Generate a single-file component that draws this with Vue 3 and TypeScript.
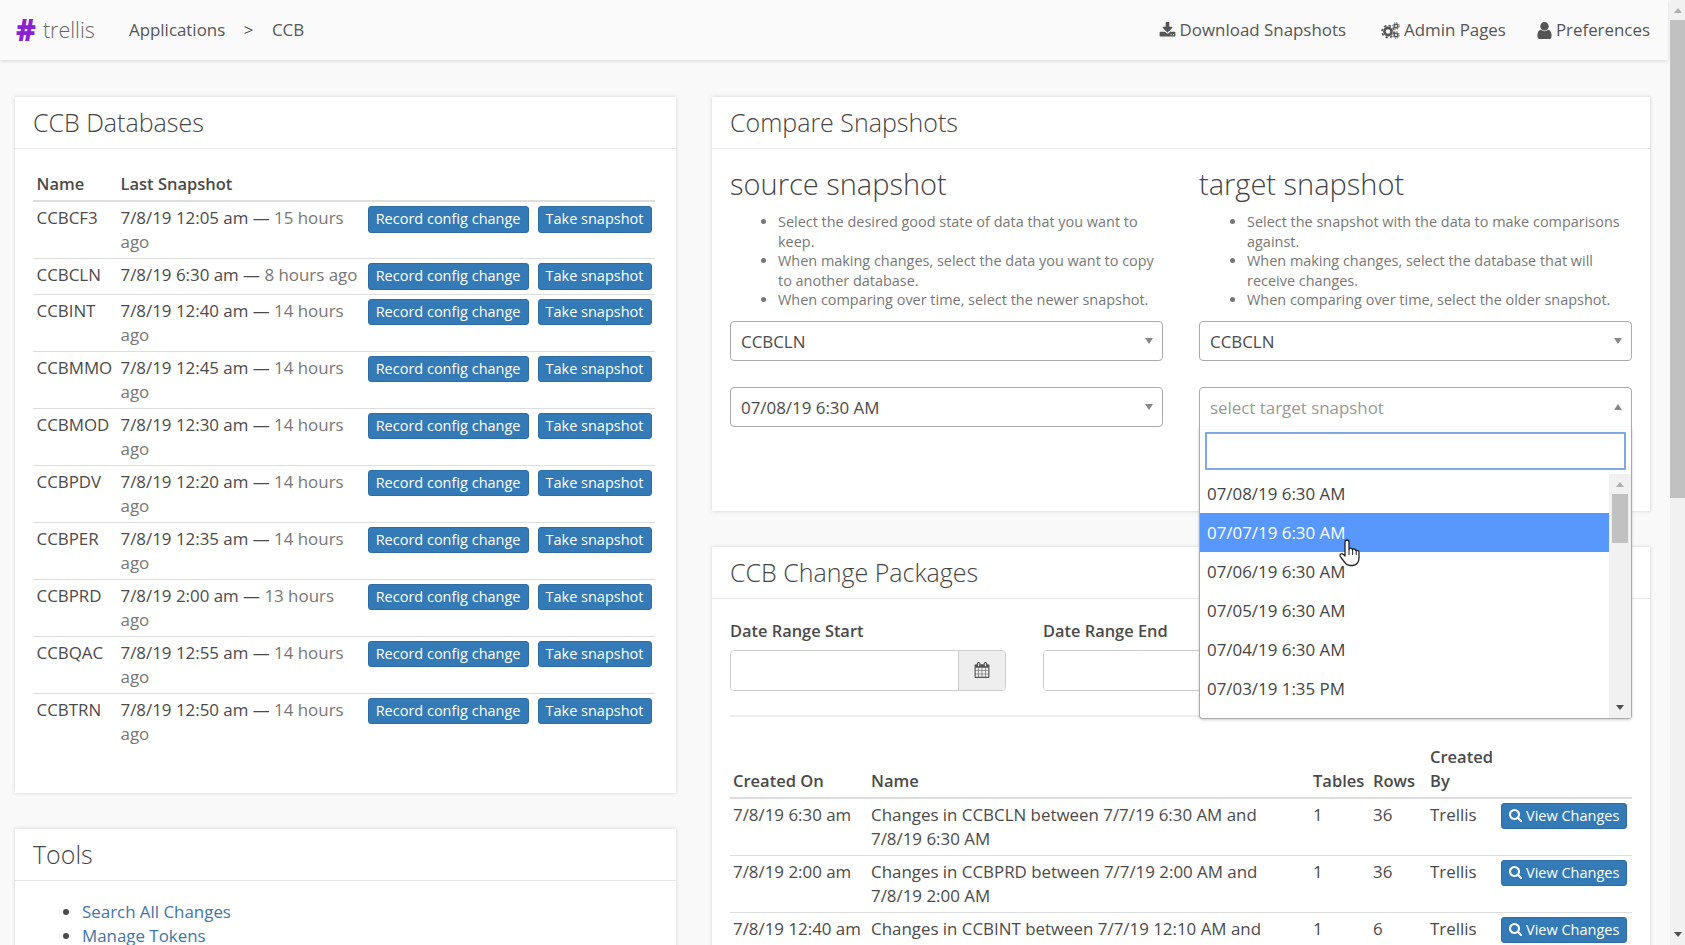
<script setup lang="ts">
interface DbRow {
  name: string
  stamp: string
  ago: string
}

interface PackageRow {
  created: string
  title: string
  tables: number
  rows: number
}

const databases: DbRow[] = [
  { name: 'CCBCF3', stamp: '7/8/19 12:05 am', ago: '15 hours ago' },
  { name: 'CCBCLN', stamp: '7/8/19 6:30 am', ago: '8 hours ago' },
  { name: 'CCBINT', stamp: '7/8/19 12:40 am', ago: '14 hours ago' },
  { name: 'CCBMMO', stamp: '7/8/19 12:45 am', ago: '14 hours ago' },
  { name: 'CCBMOD', stamp: '7/8/19 12:30 am', ago: '14 hours ago' },
  { name: 'CCBPDV', stamp: '7/8/19 12:20 am', ago: '14 hours ago' },
  { name: 'CCBPER', stamp: '7/8/19 12:35 am', ago: '14 hours ago' },
  { name: 'CCBPRD', stamp: '7/8/19 2:00 am', ago: '13 hours ago' },
  { name: 'CCBQAC', stamp: '7/8/19 12:55 am', ago: '14 hours ago' },
  { name: 'CCBTRN', stamp: '7/8/19 12:50 am', ago: '14 hours ago' },
]

const packages: PackageRow[] = [
  { created: '7/8/19 6:30 am', title: 'Changes in CCBCLN between 7/7/19 6:30 AM and 7/8/19 6:30 AM', tables: 1, rows: 36 },
  { created: '7/8/19 2:00 am', title: 'Changes in CCBPRD between 7/7/19 2:00 AM and 7/8/19 2:00 AM', tables: 1, rows: 36 },
  { created: '7/8/19 12:40 am', title: 'Changes in CCBINT between 7/7/19 12:10 AM and 7/8/19 12:40 AM', tables: 1, rows: 6 },
]

const sourceHints = [
  'Select the desired good state of data that you want to keep.',
  'When making changes, select the data you want to copy to another database.',
  'When comparing over time, select the newer snapshot.',
]

const targetHints = [
  'Select the snapshot with the data to make comparisons against.',
  'When making changes, select the database that will receive changes.',
  'When comparing over time, select the older snapshot.',
]

const snapshots = [
  '07/08/19 6:30 AM',
  '07/07/19 6:30 AM',
  '07/06/19 6:30 AM',
  '07/05/19 6:30 AM',
  '07/04/19 6:30 AM',
  '07/03/19 1:35 PM',
]

const searchPath = 'M1152 704q0-185-131.5-316.5t-316.5-131.5-316.5 131.5-131.5 316.5 131.5 316.5 316.5 131.5 316.5-131.5 131.5-316.5zm512 832q0 52-38 90t-90 38q-54 0-90-38l-343-342q-179 124-399 124-143 0-273.5-55.5t-225-150-150-225-55.5-273.5 55.5-273.5 150-225 225-150 273.5-55.5 273.5 55.5 225 150 150 225 55.5 273.5q0 220-124 399l343 343q37 37 37 90z'
</script>

<template>
  <div class="app">
    <div class="page">
      <header class="topbar">
        <div class="brand"><span class="hash">#</span><span class="word">trellis</span></div>
        <nav class="crumbs">
          <span>Applications</span>
          <span>&gt;</span>
          <span>CCB</span>
        </nav>
        <nav class="links">
          <a class="link">
            <svg class="ico" width="17" height="17" viewBox="0 0 1792 1792"><path fill="currentColor" d="M1344 1344q0-26-19-45t-45-19-45 19-19 45 19 45 45 19 45-19 19-45zm256 0q0-26-19-45t-45-19-45 19-19 45 19 45 45 19 45-19 19-45zm128-224v320q0 40-28 68t-68 28h-1472q-40 0-68-28t-28-68v-320q0-40 28-68t68-28h465l135 136q58 56 136 56t136-56l136-136h464q40 0 68 28t28 68zm-325-569q17 41-14 70l-448 448q-18 19-45 19t-45-19l-448-448q-31-29-14-70 17-39 59-39h256v-448q0-26 19-45t45-19h256q26 0 45 19t19 45v448h256q42 0 59 39z" /></svg>
            Download Snapshots
          </a>
          <a class="link">
            <svg class="ico" width="19" height="17" viewBox="0 0 19 17">
              <circle cx="7" cy="9.5" r="3.6" fill="none" stroke="currentColor" stroke-width="2.6" />
              <circle cx="7" cy="9.5" r="6" fill="none" stroke="currentColor" stroke-width="1.6" stroke-dasharray="2.4 2.3" />
              <circle cx="15" cy="4" r="1.8" fill="none" stroke="currentColor" stroke-width="1.4" />
              <circle cx="15" cy="4" r="3.2" fill="none" stroke="currentColor" stroke-width="1" stroke-dasharray="1.4 1.1" />
              <circle cx="15" cy="13" r="1.8" fill="none" stroke="currentColor" stroke-width="1.4" />
              <circle cx="15" cy="13" r="3.2" fill="none" stroke="currentColor" stroke-width="1" stroke-dasharray="1.4 1.1" />
            </svg>
            Admin Pages
          </a>
          <a class="link">
            <svg class="ico" width="15" height="17" viewBox="256 128 1280 1536"><path fill="currentColor" d="M1536 1399q0 109-62.5 187t-150.5 78h-854q-88 0-150.5-78t-62.5-187q0-85 8.5-160.5t31.5-152 58.5-131 94-89 134.5-34.5q131 128 313 128t313-128q76 0 134.5 34.5t94 89 58.5 131 31.5 152 8.5 160.5zm-256-887q0 159-112.5 271.5t-271.5 112.5-271.5-112.5-112.5-271.5 112.5-271.5 271.5-112.5 271.5 112.5 112.5 271.5z" /></svg>
            Preferences
          </a>
        </nav>
      </header>

      <main class="content">
        <div class="col">
          <section class="panel">
            <h2 class="panel-title">CCB Databases</h2>
            <div class="panel-body db-body">
              <table class="grid db-grid">
                <colgroup>
                  <col style="width: 84px" />
                  <col style="width: 248px" />
                  <col />
                </colgroup>
                <thead>
                  <tr>
                    <th>Name</th>
                    <th>Last Snapshot</th>
                    <th></th>
                  </tr>
                </thead>
                <tbody>
                  <tr v-for="db in databases" :key="db.name">
                    <td>{{ db.name }}</td>
                    <td>{{ db.stamp }} — <span class="muted">{{ db.ago }}</span></td>
                    <td>
                      <div class="actions">
                        <button class="btn" type="button">Record config change</button>
                        <button class="btn" type="button">Take snapshot</button>
                      </div>
                    </td>
                  </tr>
                </tbody>
              </table>
            </div>
          </section>

          <section class="panel">
            <h2 class="panel-title">Tools</h2>
            <div class="panel-body">
              <ul class="tools">
                <li><a>Search All Changes</a></li>
                <li><a>Manage Tokens</a></li>
              </ul>
            </div>
          </section>
        </div>

        <div class="col">
          <section class="panel">
            <h2 class="panel-title">Compare Snapshots</h2>
            <div class="panel-body compare">
              <div class="side">
                <h3>source snapshot</h3>
                <ul class="hints">
                  <li v-for="hint in sourceHints" :key="hint">{{ hint }}</li>
                </ul>
                <div class="select first"><span>CCBCLN</span><i class="caret"></i></div>
                <div class="select"><span>07/08/19 6:30 AM</span><i class="caret"></i></div>
              </div>
              <div class="side">
                <h3>target snapshot</h3>
                <ul class="hints">
                  <li v-for="hint in targetHints" :key="hint">{{ hint }}</li>
                </ul>
                <div class="select first"><span>CCBCLN</span><i class="caret"></i></div>
                <div class="select open">
                  <span class="placeholder">select target snapshot</span><i class="caret up"></i>
                  <div class="dropdown">
                    <div class="search-box"><input class="search" type="text" /></div>
                    <div class="options">
                      <ul class="option-list">
                        <li
                          v-for="(snap, index) in snapshots"
                          :key="snap"
                          class="option"
                          :class="{ active: index === 1 }"
                        >{{ snap }}</li>
                      </ul>
                      <div class="mini-scroll">
                        <i class="arrow-up"></i>
                        <div class="mini-thumb"></div>
                        <i class="arrow-down"></i>
                      </div>
                    </div>
                    <svg class="hand" width="23" height="29" viewBox="0 0 23 29">
                      <path fill="#fff" stroke="#222" stroke-width="1.3" stroke-linejoin="round" d="M6 3.2c0-1.3.9-2.2 2-2.2s2 .9 2 2.2V10c.4-.6 1.1-.9 1.8-.8.9.1 1.5.7 1.7 1.4.4-.5 1.1-.7 1.8-.6.9.2 1.4.8 1.6 1.6.5-.3 1.1-.4 1.6-.2 1 .3 1.5 1.2 1.5 2.3V19c0 4-2.5 7.5-6.5 7.5H11c-2.5 0-4-1.2-5.2-3L1.4 17.6c-.7-1-.5-2.1.3-2.6.8-.6 1.8-.4 2.5.3L6 17z" />
                      <path fill="none" stroke="#222" stroke-width="1" d="M10 10v6M13.6 10.6V16M17.2 11.8V16" />
                    </svg>
                  </div>
                </div>
              </div>
            </div>
          </section>

          <section class="panel">
            <h2 class="panel-title">CCB Change Packages</h2>
            <div class="panel-body">
              <div class="dates">
                <div class="date-field">
                  <label>Date Range Start</label>
                  <div class="date-input">
                    <div class="date-text"></div>
                    <div class="date-addon">
                      <svg width="16" height="16" viewBox="0 0 1792 1792"><path fill="#555" d="M192 1664h288v-288h-288v288zm352 0h320v-288h-320v288zm-352-352h288v-320h-288v320zm352 0h320v-320h-320v320zm-352-384h288v-288h-288v288zm736 736h320v-288h-320v288zm-384-736h320v-288h-320v288zm768 736h288v-288h-288v288zm-384-352h320v-320h-320v320zm-352-864v-288q0-13-9.5-22.5t-22.5-9.5h-64q-13 0-22.5 9.5t-9.5 22.5v288q0 13 9.5 22.5t22.5 9.5h64q13 0 22.5-9.5t9.5-22.5zm736 864h288v-320h-288v320zm-384-384h320v-288h-320v288zm384 0h288v-288h-288v288zm32-480v-288q0-13-9.5-22.5t-22.5-9.5h-64q-13 0-22.5 9.5t-9.5 22.5v288q0 13 9.5 22.5t22.5 9.5h64q13 0 22.5-9.5t9.5-22.5zm384-64v1280q0 52-38 90t-90 38h-1408q-52 0-90-38t-38-90v-1280q0-52 38-90t90-38h128v-96q0-66 47-113t113-47h64q66 0 113 47t47 113v96h384v-96q0-66 47-113t113-47h64q66 0 113 47t47 113v96h128q52 0 90 38t38 90z" /></svg>
                    </div>
                  </div>
                </div>
                <div class="date-field">
                  <label>Date Range End</label>
                  <div class="date-input">
                    <div class="date-text"></div>
                    <div class="date-addon"></div>
                  </div>
                </div>
              </div>
              <hr class="rule" />
              <table class="grid pkg-grid">
                <colgroup>
                  <col style="width: 138px" />
                  <col style="width: 442px" />
                  <col style="width: 60px" />
                  <col style="width: 57px" />
                  <col style="width: 71px" />
                  <col />
                </colgroup>
                <thead>
                  <tr>
                    <th>Created On</th>
                    <th>Name</th>
                    <th>Tables</th>
                    <th>Rows</th>
                    <th>Created By</th>
                    <th></th>
                  </tr>
                </thead>
                <tbody>
                  <tr v-for="pkg in packages" :key="pkg.title">
                    <td class="nowrap">{{ pkg.created }}</td>
                    <td>{{ pkg.title }}</td>
                    <td>{{ pkg.tables }}</td>
                    <td>{{ pkg.rows }}</td>
                    <td>Trellis</td>
                    <td>
                      <button class="btn" type="button">
                        <svg width="14" height="14" viewBox="0 0 1792 1792"><path fill="#fff" :d="searchPath" /></svg>
                        View Changes
                      </button>
                    </td>
                  </tr>
                </tbody>
              </table>
            </div>
          </section>
        </div>
      </main>
    </div>

    <aside class="scrollbar">
      <i class="arrow-up"></i>
      <div class="thumb"></div>
      <div class="spacer"></div>
      <i class="arrow-down"></i>
    </aside>
  </div>
</template>

<style>
html,
body {
  margin: 0;
  overflow: hidden;
  background: #f9f9f9;
}
</style>

<style scoped>
.app {
  display: flex;
  height: 945px;
  overflow: hidden;
  font-family: "Open Sans", "Liberation Sans", sans-serif;
  font-size: 16.9px;
  line-height: 24px;
  color: #4a4a4a;
  background: #f9f9f9;
}

.page {
  flex: 1;
  min-width: 0;
  overflow: hidden;
}

.topbar {
  display: flex;
  align-items: center;
  height: 60px;
  margin-right: 2px;
  padding: 0 18px 0 15px;
  background: #fafafa;
  box-shadow: 0 1px 4px rgba(0, 0, 0, 0.14);
  color: #555;
}

.brand {
  display: flex;
  align-items: center;
  width: 114px;
}

.hash {
  margin: 0 7px 0 1px;
  font-size: 30px;
  font-weight: 800;
  color: #8a22cf;
}

.word {
  font-size: 21.5px;
  font-weight: 300;
  color: #666;
}

.crumbs {
  display: flex;
  gap: 18.5px;
}

.links {
  display: flex;
  gap: 33px;
  margin-left: auto;
}

.link {
  display: flex;
  align-items: center;
  gap: 4px;
}

.link:nth-child(2) {
  margin: 0 -2px 0 2px;
}

.ico {
  flex-shrink: 0;
}

.content {
  display: grid;
  grid-template-columns: 661px 1fr;
  gap: 36px;
  padding: 37px 20px 0 15px;
}

.col {
  display: flex;
  flex-direction: column;
  gap: 36px;
  min-width: 0;
}

.panel {
  background: #fff;
  box-shadow: 0 0 4px rgba(0, 0, 0, 0.16);
}

.panel-title {
  margin: 0;
  height: 51px;
  padding: 0 18px;
  font-size: 25px;
  font-weight: 300;
  line-height: 50px;
  color: #444;
  border-bottom: 1px solid #e8e8e8;
}

.panel-body {
  padding: 19px 18px 18px;
}

.db-body {
  padding-right: 21px;
  padding-bottom: 43px;
}

.grid {
  width: 100%;
  table-layout: fixed;
  border-collapse: separate;
  border-spacing: 0;
}

.grid th {
  padding: 4px 3.5px;
  font-size: 16.5px;
  font-weight: 600;
  text-align: left;
  vertical-align: bottom;
  border-bottom: 2px solid #ddd;
}

.grid td {
  padding: 4px 3.5px;
  vertical-align: top;
  border-bottom: 1px solid #ddd;
}

.pkg-grid th,
.pkg-grid td {
  padding-left: 3px;
  padding-right: 3px;
}

.db-grid tr:last-child td {
  border-bottom: 0;
}

.muted {
  color: #777;
}

.actions {
  display: flex;
  justify-content: flex-end;
  gap: 9px;
}

.btn {
  display: inline-flex;
  align-items: center;
  justify-content: center;
  gap: 3px;
  height: 26.5px;
  padding: 0 7px;
  border: 1px solid #2e6da4;
  border-radius: 3px;
  background: #337ab7;
  color: #fff;
  font: inherit;
  font-size: 14.5px;
  white-space: nowrap;
}

.nowrap {
  white-space: nowrap;
}

.tools {
  margin: 0;
  padding: 0 0 0 49px;
}

.tools a {
  color: #3f75a8;
}

.compare {
  display: grid;
  grid-template-columns: 1fr 1fr;
  gap: 36px;
}

.side {
  min-width: 0;
  padding-bottom: 65px;
}

.side h3 {
  margin: -1px 0 0;
  font-size: 29px;
  font-weight: 300;
  line-height: 33px;
  color: #444;
}

.hints {
  margin: 12px 0 0;
  padding: 0 0 0 48px;
  font-size: 14.45px;
  line-height: 19.5px;
  color: #777;
}

.select {
  position: relative;
  display: flex;
  align-items: center;
  height: 40px;
  margin-top: 26px;
  padding: 2px 10px 0;
  border: 1px solid #aaa;
  border-radius: 4px;
  background: #fff;
  box-sizing: border-box;
}

.select.first {
  margin-top: 11px;
}

.select.open {
  height: 41px;
  border-bottom-left-radius: 0;
  border-bottom-right-radius: 0;
}

.placeholder {
  color: #999;
}

.caret {
  position: absolute;
  top: 16px;
  right: 9px;
  border-left: 4.5px solid transparent;
  border-right: 4.5px solid transparent;
  border-top: 6px solid #888;
}

.caret.up {
  border-top: 0;
  border-bottom: 6px solid #888;
}

.dropdown {
  position: absolute;
  top: 100%;
  left: -1px;
  right: -1px;
  z-index: 10;
  border: 1px solid #aaa;
  border-top: 0;
  border-radius: 0 0 4px 4px;
  background: #fff;
  box-shadow: 0 1px 3px rgba(0, 0, 0, 0.2);
}

.search-box {
  padding: 5px 5px 4px 5px;
}

.search {
  display: block;
  width: 100%;
  height: 38px;
  box-sizing: border-box;
  border: 2px solid #7da9e0;
  border-radius: 1px;
  outline: none;
  background: #fff;
}

.options {
  display: flex;
  height: 244px;
  overflow: hidden;
}

.option-list {
  flex: 1;
  margin: 0;
  padding: 0;
  list-style: none;
}

.option {
  height: 39px;
  padding: 0 7px;
  line-height: 39px;
  color: #444;
}

.option.active {
  background: #5897fb;
  color: #fff;
}

.mini-scroll {
  position: relative;
  width: 22px;
  background: #f1f1f1;
}

.mini-thumb {
  position: absolute;
  top: 20px;
  left: 3px;
  width: 16px;
  height: 49px;
  background: #c1c1c1;
}

.arrow-up,
.arrow-down {
  position: absolute;
  left: 50%;
  margin-left: -4px;
  border-left: 4px solid transparent;
  border-right: 4px solid transparent;
}

.arrow-up {
  top: 8px;
  border-bottom: 5px solid #b0b0b0;
}

.arrow-down {
  bottom: 8px;
  border-top: 5px solid #505050;
}

.hand {
  position: absolute;
  top: 112px;
  left: 139px;
}

.dates {
  display: flex;
  gap: 37px;
  margin-top: 1px;
}

.date-field label {
  display: block;
  font-size: 16.4px;
  font-weight: 600;
  margin-bottom: 7px;
}

.date-input {
  display: flex;
  width: 276px;
  height: 41px;
  box-sizing: border-box;
  border: 1px solid #ccc;
  border-radius: 4px;
  overflow: hidden;
}

.date-text {
  flex: 1;
  background: #fff;
}

.date-addon {
  display: flex;
  align-items: center;
  justify-content: center;
  width: 46px;
  border-left: 1px solid #ccc;
  background: #eee;
}

.rule {
  margin: 24px 0 0;
  border: 0;
  border-top: 2px solid #eee;
}

.pkg-grid {
  margin-top: 24px;
}

.scrollbar {
  position: relative;
  display: flex;
  flex-direction: column;
  width: 15px;
  background: #f1f1f1;
}

.thumb {
  margin-top: 20px;
  height: 478px;
  background: #c1c1c1;
}

.spacer {
  flex: 1;
}
</style>
